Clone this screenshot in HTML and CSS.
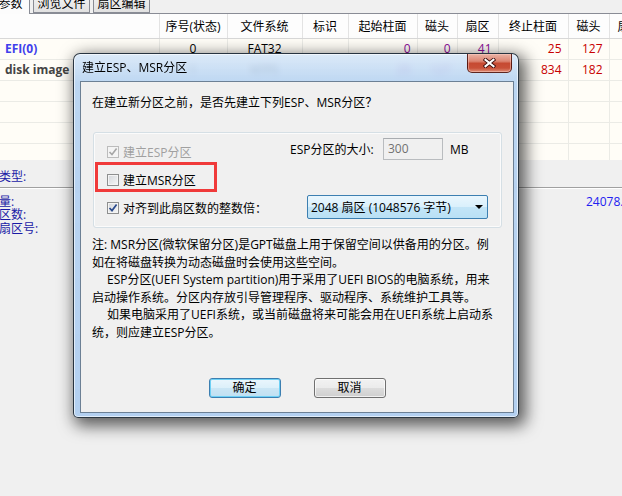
FILE: index.html
```html
<!DOCTYPE html>
<html lang="zh-CN">
<head>
  <meta charset="UTF-8">
  <title>建立ESP、MSR分区</title>
  <link rel="stylesheet" href="styles.css">
</head>
<body>
  <!-- main window behind the dialog -->
  <div class="tabs">
    <div class="tab active">参数</div>
    <div class="tab">浏览文件</div>
    <div class="tab">扇区编辑</div>
  </div>

  <div class="grid-wrap">
    <table class="parts">
      <colgroup>
        <col style="width:159px"><col style="width:68px"><col style="width:75px"><col style="width:46px">
        <col style="width:69px"><col style="width:40px"><col style="width:41px"><col style="width:70px">
        <col style="width:41px"><col style="width:41px">
      </colgroup>
      <thead>
        <tr>
          <th></th><th>序号(状态)</th><th>文件系统</th><th>标识</th><th>起始柱面</th>
          <th>磁头</th><th>扇区</th><th>终止柱面</th><th>磁头</th><th>扇区</th>
        </tr>
      </thead>
      <tbody>
        <tr>
          <td class="name efi">EFI(0)</td><td class="mid">0</td><td class="mid">FAT32</td><td></td>
          <td class="num start">0</td><td class="num start">0</td><td class="num start">41</td>
          <td class="num end">25</td><td class="num end">127</td><td class="num end">2</td>
        </tr>
        <tr>
          <td class="name disk">disk image</td><td class="mid">1</td><td class="mid">NTFS</td><td></td>
          <td class="num start">25</td><td class="num start">127</td><td class="num start">3</td>
          <td class="num end">834</td><td class="num end">182</td><td class="num end">60</td>
        </tr>
        <tr><td></td><td></td><td></td><td></td><td></td><td></td><td></td><td></td><td></td><td></td></tr>
        <tr><td></td><td></td><td></td><td></td><td></td><td></td><td></td><td></td><td></td><td></td></tr>
        <tr><td></td><td></td><td></td><td></td><td></td><td></td><td></td><td></td><td></td><td></td></tr>
        <tr><td></td><td></td><td></td><td></td><td></td><td></td><td></td><td></td><td></td><td></td></tr>
      </tbody>
    </table>
  </div>

  <div class="info">
    <div class="info-row"><span class="info-label">分区类型:</span></div>
    <div class="info-sep"></div>
    <div class="info-row"><span class="info-label">总容量:</span><span class="info-value">24078.0MB</span></div>
    <div class="info-row"><span class="info-label">总扇区数:</span></div>
    <div class="info-row"><span class="info-label">起始扇区号:</span></div>
  </div>

  <!-- modal dialog -->
  <div class="dialog">
    <div class="titlebar">
      <span class="title">建立ESP、MSR分区</span>
      <button class="close" aria-label="关闭">
        <svg width="13" height="10" viewBox="0 0 13 10">
          <path d="M2.5 1.8 L10.5 8.2 M10.5 1.8 L2.5 8.2" stroke="#3a0c0c" stroke-width="3.8" stroke-linecap="square"/>
          <path d="M2.5 1.8 L10.5 8.2 M10.5 1.8 L2.5 8.2" stroke="#fff" stroke-width="2.1" stroke-linecap="square"/>
        </svg>
      </button>
    </div>

    <div class="client">
      <div class="prompt">在建立新分区之前，是否先建立下列ESP、MSR分区？</div>

      <div class="group">
        <div class="row row-esp">
          <label class="check-cell esp-check disabled">
            <span class="cb"><svg width="10" height="10" viewBox="0 0 10 10"><path d="M1.5 5 L4 7.6 L8.6 1.6" fill="none" stroke="#a6a6a6" stroke-width="1.6"/></svg></span>
            建立ESP分区
          </label>
          <span class="size-label">ESP分区的大小:</span>
          <span class="size-input">300</span>
          <span class="unit">MB</span>
        </div>

        <div class="row row-msr">
          <label class="check-cell">
            <span class="cb"></span>
            建立MSR分区
          </label>
        </div>

        <div class="row row-align">
          <label class="check-cell align-check">
            <span class="cb"><svg width="10" height="10" viewBox="0 0 10 10"><path d="M1.5 5 L4 7.6 L8.6 1.6" fill="none" stroke="#2b4a8c" stroke-width="1.7"/></svg></span>
            对齐到此扇区数的整数倍：
          </label>
          <div class="combo">
            <span>2048 扇区 (1048576 字节)</span>
            <span class="arrow"></span>
          </div>
        </div>
      </div>

      <div class="note">
        <p>注: MSR分区(微软保留分区)是GPT磁盘上用于保留空间以供备用的分区。例<br>如在将磁盘转换为动态磁盘时会使用这些空间。</p>
        <p class="indent">ESP分区(UEFI System partition)用于采用了UEFI BIOS的电脑系统，用来<br>启动操作系统。分区内存放引导管理程序、驱动程序、系统维护工具等。</p>
        <p class="indent">如果电脑采用了UEFI系统，或当前磁盘将来可能会用在UEFI系统上启动系<br>统，则应建立ESP分区。</p>
      </div>

      <div class="buttons">
        <button class="btn default">确定</button>
        <button class="btn">取消</button>
      </div>
    </div>
  </div>
</body>
</html>
```

FILE: styles.css
```css
body {
  margin: 0;
  width: 622px;
  height: 496px;
  overflow: hidden;
  position: relative;
  background: #f0f0f0;
  color: #000;
  font-family: "Open Sans", "Noto Sans CJK SC", sans-serif;
  font-size: 12px;
}

/* tab strip at the top, cut off by the window edge */
.tabs {
  height: 14px;
  display: flex;
  align-items: flex-start;
  overflow: hidden;
  box-shadow: inset 0 -1px 0 #898c95;
}

.tab {
  margin-top: -6px;
  height: 19px;
  line-height: 17px;
  padding: 0 2px;
  margin-left: 3px;
  box-sizing: border-box;
  border: 1px solid #898c95;
  background: linear-gradient(#f3f3f3, #e1e1e1);
  text-align: center;
  white-space: nowrap;
  width: 57px;
}

.tab.active {
  width: 38px;
  height: 20px;
  margin-left: -8px;
  border-left: none;
  background: #fcfcfc;
  border-bottom: none;
}

/* partition list */
.grid-wrap {
  height: 146px;
  overflow: hidden;
  background: #fffdf7;
}

.parts {
  width: 650px;
  table-layout: fixed;
  border-collapse: collapse;
}

.parts th {
  height: 24px;
  padding: 0;
  font-weight: normal;
  background: #fdfdfd;
  border-right: 1px solid #e3e3e3;
  border-bottom: 1px solid #d8d8d8;
  white-space: nowrap;
  overflow: hidden;
}

.parts td {
  height: 20px;
  padding: 0 6px 0 5px;
  border-right: 1px solid #ebebe6;
  border-bottom: 1px solid #ebebe6;
  white-space: nowrap;
  overflow: hidden;
  line-height: 20px;
}

.parts td.name {
  font-weight: bold;
  padding-left: 5px;
}

.parts .efi { color: #4040ec; }
.parts .disk { color: #444; }
.parts .mid { text-align: center; padding: 0; }
.parts .num { text-align: right; }
.parts .start { color: #8a0a96; }
.parts .end { color: #c80000; }

/* details area below the list */
.info {
  padding-top: 10px;
  color: #1a1aa6;
  line-height: 13.5px;
}

.info-sep {
  height: 1px;
  background: #a0a0a0;
  box-shadow: 0 1px 0 #fff;
  margin: 3px 0 7px;
}

.info-row {
  display: flex;
  white-space: nowrap;
}

.info-label {
  width: 611px;
  margin-left: -25px;
  flex-shrink: 0;
}

.info-value {
  color: #2020f0;
}

/* dialog window */
.dialog {
  position: absolute;
  left: 73px;
  top: 53px;
  width: 446px;
  height: 365px;
  box-sizing: border-box;
  padding: 0 4px 4px 6px;
  display: flex;
  flex-direction: column;
  border: 1px solid rgba(25, 35, 45, 0.9);
  border-radius: 7px 7px 5px 5px;
  background: linear-gradient(rgba(214, 230, 248, 0.86), rgba(178, 208, 241, 0.88) 30px, rgba(172, 204, 240, 0.9));
  backdrop-filter: blur(3px);
  box-shadow: 4px 5px 16px 3px rgba(0, 0, 0, 0.62), inset 0 0 0 1px rgba(255, 255, 255, 0.6);
}

.titlebar {
  height: 27px;
  display: flex;
  align-items: flex-start;
}

.title {
  padding: 5px 0 0 2px;
  line-height: 17px;
  white-space: nowrap;
}

.close {
  margin: 0 2px 0 auto;
  width: 45px;
  height: 19px;
  padding: 0;
  display: flex;
  align-items: center;
  justify-content: center;
  border: 1px solid rgba(70, 15, 10, 0.85);
  border-top: none;
  border-radius: 0 0 5px 5px;
  background: linear-gradient(#eab4a6 0%, #dc8572 40%, #c64a32 52%, #c85038 78%, #e0907a 100%);
  box-shadow: inset 0 0 0 1px rgba(255, 210, 200, 0.45);
}

.client {
  flex: 1;
  border: 1px solid #6c8095;
  background: #f0f0f0;
  padding: 12px 11px 0 11px;
}

.prompt {
  line-height: 17px;
  white-space: nowrap;
}

.group {
  margin: 21px 0 0 1px;
  border: 1px solid #d5dfe5;
  border-radius: 3px;
  box-shadow: inset 0 0 0 1px #fbfbfb;
  padding: 5px 0 8px 13px;
}

.row {
  display: flex;
  align-items: center;
  white-space: nowrap;
}

.row-esp { height: 22px; }

.check-cell {
  display: flex;
  align-items: center;
  gap: 4px;
  line-height: 15px;
}

.esp-check {
  width: 183px;
  margin-top: 6px;
}

.disabled { color: #a0a0a0; }

.cb {
  width: 12px;
  height: 12px;
  box-sizing: border-box;
  border: 1px solid #8e8f8f;
  background: linear-gradient(135deg, #d3d6da, #f7f7f7);
  box-shadow: inset 0 0 0 1px #f4f4f4;
  display: flex;
  align-items: center;
  justify-content: center;
  flex-shrink: 0;
}

.disabled .cb {
  border-color: #bcbcbc;
  background: #f4f4f4;
}

.size-label {
  width: 93px;
  line-height: 15px;
}

.size-input {
  width: 60px;
  height: 22px;
  box-sizing: border-box;
  border: 1px solid #b9bcbf;
  border-top-color: #a9acb0;
  padding-left: 4px;
  line-height: 20px;
  color: #707070;
}

.unit {
  margin-left: 7px;
  line-height: 15px;
}

.row-msr {
  margin: 2px 0 0 -12px;
  width: 122px;
  height: 30px;
  box-sizing: border-box;
  border: 3px solid #f03a3a;
  padding: 6px 0 0 9px;
}

.row-align {
  margin-top: 3px;
  height: 24px;
}

.align-check {
  width: 200px;
  margin-top: 2px;
}

.combo {
  width: 181px;
  height: 24px;
  box-sizing: border-box;
  border: 1px solid #3c7fb1;
  border-radius: 2px;
  background: linear-gradient(#eaf6fd, #d9f0fc 50%, #c3e5f7 50%, #b9e0f5);
  display: flex;
  align-items: center;
  padding: 0 4px 0 3px;
  line-height: 15px;
}

.arrow {
  margin-left: auto;
  width: 0;
  height: 0;
  border-left: 4px solid transparent;
  border-right: 4px solid transparent;
  border-top: 4px solid #000;
}

.note {
  margin-top: 8px;
  line-height: 17.5px;
  white-space: nowrap;
}

.note p {
  margin: 0;
}

.note .indent {
  text-indent: 15px;
}

.buttons {
  margin-top: 37px;
  display: flex;
  justify-content: center;
  gap: 33px;
}

.btn {
  width: 72px;
  height: 20px;
  padding: 0;
  font: inherit;
  color: #000;
  border: 1px solid #707070;
  border-radius: 3px;
  background: linear-gradient(#f2f2f2, #ebebeb 50%, #dddddd 50%, #cfcfcf);
  box-shadow: inset 0 0 0 1px rgba(255, 255, 255, 0.7);
  line-height: 16px;
}

.btn.default {
  border-color: #3c7fb1;
  background: linear-gradient(#eaf6fd, #dcf0fa 50%, #cbe6f5 50%, #c0e0f2);
  box-shadow: inset 0 0 0 1px #6dd0f5;
}
```
